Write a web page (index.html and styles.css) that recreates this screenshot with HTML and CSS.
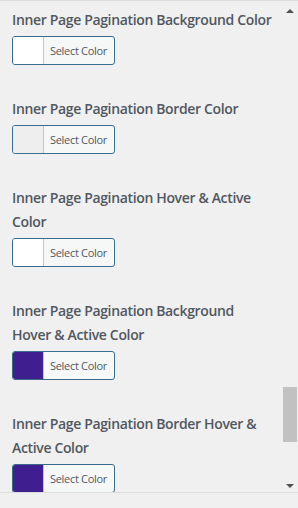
FILE: index.html
```html
<!DOCTYPE html>
<html>
<head>
<meta charset="utf-8">
<link rel="stylesheet" href="styles.css">
</head>
<body>
<div class="frame">
  <div class="panel">
    <div class="content">
      <div class="control">
        <div class="title">Inner Page Pagination Background Color</div>
        <button class="picker"><span class="swatch" style="background:#ffffff"></span><span class="label">Select Color</span></button>
      </div>
      <div class="control">
        <div class="title">Inner Page Pagination Border Color</div>
        <button class="picker"><span class="swatch" style="background:#eeeeee"></span><span class="label">Select Color</span></button>
      </div>
      <div class="control">
        <div class="title">Inner Page Pagination Hover &amp; Active Color</div>
        <button class="picker"><span class="swatch" style="background:#ffffff"></span><span class="label">Select Color</span></button>
      </div>
      <div class="control">
        <div class="title">Inner Page Pagination Background Hover &amp; Active Color</div>
        <button class="picker"><span class="swatch" style="background:#3f1e8f"></span><span class="label">Select Color</span></button>
      </div>
      <div class="control">
        <div class="title">Inner Page Pagination Border Hover &amp; Active Color</div>
        <button class="picker"><span class="swatch" style="background:#3f1e8f"></span><span class="label">Select Color</span></button>
      </div>
    </div>
    <div class="scrollbar">
      <div class="arrow up"></div>
      <div class="track"><div class="thumb"></div></div>
      <div class="arrow down"></div>
    </div>
  </div>
  <div class="footer"></div>
</div>
</body>
</html>
```

FILE: styles.css
```css
html, body {
  margin: 0;
  padding: 0;
  background: #f0f0f1;
}
.frame {
  width: 298px;
  height: 508px;
  display: flex;
  flex-direction: column;
  border-top: 1px solid #dcdcde;
  box-sizing: border-box;
  overflow: hidden;
}
.panel {
  height: 491px;
  display: flex;
  overflow: hidden;
  border-bottom: 1px solid #dcdcde;
  flex: none;
}
.content {
  flex: 1;
  padding: 7px 0 0 12px;
  overflow: hidden;
}
.control {
  margin-bottom: 32px;
}
.title {
  font-family: "Segoe UI", "Open Sans", "Noto Sans", sans-serif;
  font-size: 14px;
  font-weight: 600;
  line-height: 24px;
  color: #50575e;
  width: 261px;
  letter-spacing: -0.35px;
}
.picker {
  margin-top: 4px;
  display: flex;
  align-items: stretch;
  width: 103px;
  height: 29px;
  padding: 0;
  border: 1px solid #3a6b8c;
  border-radius: 3px;
  background: #f6f7f7;
  overflow: hidden;
  box-sizing: border-box;
  cursor: pointer;
}
.swatch {
  width: 30px;
  flex: none;
  border-right: 1px solid #c3c4c7;
}
.label {
  flex: 1;
  display: flex;
  align-items: center;
  padding-left: 6px;
  font-family: "Segoe UI", "Open Sans", "Noto Sans", sans-serif;
  font-size: 11px;
  color: #50575e;
  letter-spacing: -0.3px;
}
.scrollbar {
  width: 14px;
  flex: none;
  display: flex;
  flex-direction: column;
  margin-right: 1px;
}
.arrow {
  height: 17px;
  flex: none;
  position: relative;
}
.arrow::after {
  content: "";
  position: absolute;
  left: 3px;
  width: 0;
  height: 0;
  border-left: 4px solid transparent;
  border-right: 4px solid transparent;
}
.arrow.up::after {
  top: 8px;
  border-bottom: 4px solid #505050;
}
.arrow.down::after {
  bottom: 4px;
  border-top: 4px solid #505050;
}
.track {
  flex: 1;
  position: relative;
}
.thumb {
  position: absolute;
  left: 0;
  right: 0;
  top: 369px;
  height: 55px;
  background: #c1c1c1;
}
.footer {
  flex: 1;
  background: #f0f0f1;
}
```
